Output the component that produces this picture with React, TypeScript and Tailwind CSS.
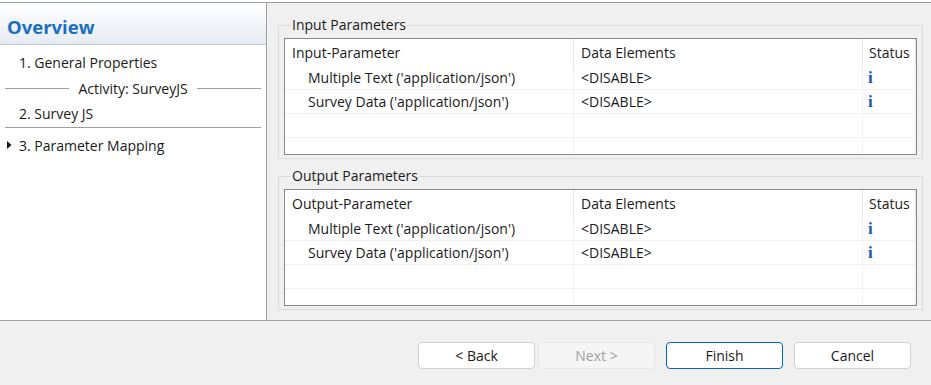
const FONT = "font-['Open_Sans',sans-serif]";

type Row = { name: string; data: string };

const rows: Row[] = [
  { name: "Multiple Text ('application/json')", data: "<DISABLE>" },
  { name: "Survey Data ('application/json')", data: "<DISABLE>" },
];

function ParamTable({ title }: { title: string }) {
  return (
    <div className="border border-[#828790] bg-white h-[117px] overflow-hidden">
      {/* header */}
      <div className="flex h-[27px] items-center">
        <div className="w-[289px] h-full pl-[7px] flex items-center border-r border-[#e5e5e5]">{title}</div>
        <div className="w-[289px] h-full pl-[7px] flex items-center border-r border-[#e5e5e5]">Data Elements</div>
        <div className="w-[53px] h-full pl-[6px] flex items-center border-r border-[#e5e5e5]">Status</div>
      </div>
      {[...rows, null, null].map((r, i) => (
        <div key={i} className="flex h-[24px] border-b border-[#f0f0f0]">
          <div className="w-[289px] h-full pl-[23px] flex items-center border-r border-[#f0f0f0]">{r?.name}</div>
          <div className="w-[289px] h-full pl-[7px] flex items-center border-r border-[#f0f0f0]">{r?.data}</div>
          <div className="w-[53px] h-full pl-[5px] flex items-center border-r border-[#f0f0f0]">
            {r && (
              <span className="font-['Liberation_Serif',serif] font-bold text-[17px] text-[#1d5aa0] leading-none">i</span>
            )}
          </div>
        </div>
      ))}
    </div>
  );
}

function Group({ label, title }: { label: string; title: string }) {
  return (
    <fieldset className="border border-[#dcdcdc] px-[5px] pb-[3px] pt-[4px]">
      <legend className="ml-[7px] px-[1px] leading-[18px]">{label}</legend>
      <ParamTable title={title} />
    </fieldset>
  );
}

function Button({ children, variant }: { children: string; variant?: "primary" | "disabled" }) {
  const cls =
    variant === "primary"
      ? "border-[#0067c0] bg-white text-[#1a1a1a]"
      : variant === "disabled"
        ? "border-[#e5e5e5] bg-[#f5f5f5] text-[#a0a0a0]"
        : "border-[#d0d0d0] bg-white text-[#1a1a1a]";
  return (
    <div className={`w-[117px] h-[27px] rounded-[4px] border flex items-center justify-center ${cls}`}>
      {children}
    </div>
  );
}

export default function App() {
  return (
    <div className={`w-[931px] h-[385px] flex flex-col bg-[#f0f0f0] text-[14px] text-[#1a1a1a] ${FONT} overflow-hidden`}>
      <div className="h-[2px] bg-white" />
      <div className="flex h-[319px] border-t border-b border-[#a0a0a0]">
        {/* left overview */}
        <div className="w-[267px] bg-white border-r border-[#a0a0a0] flex flex-col">
          <div className="h-[42px] border-b border-[#bcc6d1] bg-gradient-to-b from-white to-[#e6ecf3] flex items-center pl-[7px] pt-[7px]">
            <span className="text-[#1b6ec2] font-bold text-[18.5px]">Overview</span>
          </div>
          <div className="h-[30px] pl-[19px] flex items-end pb-[2px]">1. General Properties</div>
          <div className="h-[26px] flex items-center px-[5px] gap-[9px]">
            <div className="flex-1 h-px bg-[#a0a0a0]" />
            <span>Activity: SurveyJS</span>
            <div className="flex-1 h-px bg-[#a0a0a0]" />
          </div>
          <div className="h-[24px] pl-[19px] flex items-center">2. Survey JS</div>
          <div className="mx-[5px] h-px bg-[#a0a0a0] mt-[2px]" />
          <div className="h-[34px] flex items-center pl-[7px]">
            <svg width="5" height="8" viewBox="0 0 5 8" className="mr-[7px]">
              <path d="M0 0 L4.5 4 L0 8 Z" fill="#1a1a1a" />
            </svg>
            3. Parameter Mapping
          </div>
        </div>
        {/* right content */}
        <div className="flex-1 pl-[11px] pr-[8px] pt-[13px] flex flex-col gap-[8px]">
          <Group label="Input Parameters" title="Input-Parameter" />
          <Group label="Output Parameters" title="Output-Parameter" />
        </div>
      </div>
      {/* footer */}
      <div className="flex-1 flex items-start justify-end pt-[21px] pr-[20px]">
        <div className="flex gap-[3px]">
          <Button>&lt; Back</Button>
          <Button variant="disabled">Next &gt;</Button>
        </div>
        <div className="ml-[11px] flex gap-[11px]">
          <Button variant="primary">Finish</Button>
          <Button>Cancel</Button>
        </div>
      </div>
    </div>
  );
}
